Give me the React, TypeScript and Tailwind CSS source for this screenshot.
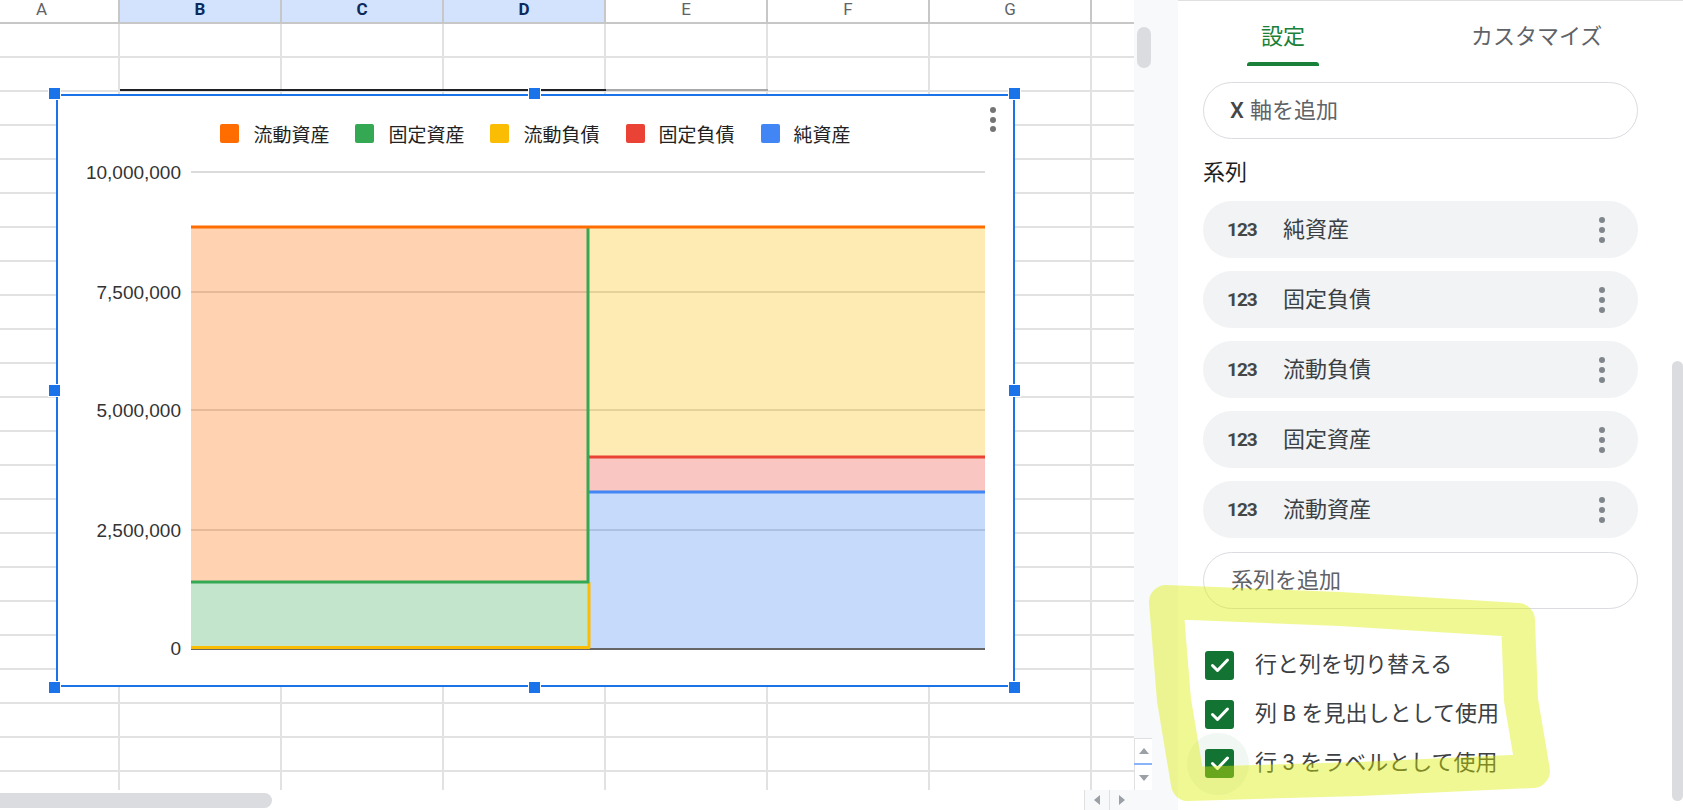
import React from 'react';

// column header of the sheet
const Header = () => (
  <div className="flex h-[24px] shrink-0 border-b-2 border-[#c7c7c7] font-['Roboto',Arial,sans-serif] text-[17px] leading-[19px]">
    <div className="flex w-[120px] shrink-0 items-start border-r-2 border-[#c7c7c7] bg-white pl-[36px]">
      <span className="text-[#5f6368]">A</span>
    </div>
    <div className="flex w-[162px] shrink-0 items-start justify-center border-r-2 border-[#c7c7c7] bg-[#d3e3fd]">
      <span className="font-bold text-[#0b2a5b]">B</span>
    </div>
    <div className="flex w-[162px] shrink-0 items-start justify-center border-r-2 border-[#c7c7c7] bg-[#d3e3fd]">
      <span className="font-bold text-[#0b2a5b]">C</span>
    </div>
    <div className="flex w-[162px] shrink-0 items-start justify-center border-r-2 border-[#c7c7c7] bg-[#d3e3fd]">
      <span className="font-bold text-[#0b2a5b]">D</span>
    </div>
    <div className="flex w-[162px] shrink-0 items-start justify-center border-r-2 border-[#c7c7c7] bg-white">
      <span className="text-[#5f6368]">E</span>
    </div>
    <div className="flex w-[162px] shrink-0 items-start justify-center border-r-2 border-[#c7c7c7] bg-white">
      <span className="text-[#5f6368]">F</span>
    </div>
    <div className="flex w-[162px] shrink-0 items-start justify-center border-r-2 border-[#c7c7c7] bg-white">
      <span className="text-[#5f6368]">G</span>
    </div>
    <div className="flex-1 bg-white" />
  </div>
);

const Row = () => (
  <div className="flex h-[34px] shrink-0 border-b-2 border-[#e2e2e2]">
    <div className="w-[120px] shrink-0 border-r-2 border-[#e2e2e2]" />
    <div className="w-[162px] shrink-0 border-r-2 border-[#e2e2e2]" />
    <div className="w-[162px] shrink-0 border-r-2 border-[#e2e2e2]" />
    <div className="w-[162px] shrink-0 border-r-2 border-[#e2e2e2]" />
    <div className="w-[162px] shrink-0 border-r-2 border-[#e2e2e2]" />
    <div className="w-[162px] shrink-0 border-r-2 border-[#e2e2e2]" />
    <div className="w-[162px] shrink-0 border-r-2 border-[#e2e2e2]" />
    <div className="flex-1" />
  </div>
);

const legend = [
  { name: '流動資産', color: 'bg-[#ff6d01]' },
  { name: '固定資産', color: 'bg-[#34a853]' },
  { name: '流動負債', color: 'bg-[#fbbc04]' },
  { name: '固定負債', color: 'bg-[#ea4335]' },
  { name: '純資産', color: 'bg-[#4285f4]' },
];

const yTicks = [
  { y: 76, label: '10,000,000' },
  { y: 196, label: '7,500,000' },
  { y: 314, label: '5,000,000' },
  { y: 434, label: '2,500,000' },
  { y: 552, label: '0' },
];

const Handle = ({ className }: { className: string }) => (
  <div className={`absolute h-[13px] w-[13px] border border-white bg-[#1a73e8] ${className}`} />
);

const Chart = () => (
  <div className="absolute left-[56px] top-[94px] h-[593px] w-[959px] border-2 border-[#1a73e8] bg-white">
    <svg className="absolute left-0 top-0" width={955} height={589} viewBox="0 0 955 589">
      {yTicks.slice(0, 4).map((t) => (
        <line key={t.y} x1={133} x2={927} y1={t.y} y2={t.y} stroke="#cfcfcf" strokeWidth={1.5} />
      ))}
      <rect x={133} y={486} width={397} height={66} fill="#34a853" fillOpacity={0.3} />
      <rect x={133} y={131} width={397} height={355} fill="#ff6d01" fillOpacity={0.3} />
      <rect x={531} y={396} width={396} height={156} fill="#4285f4" fillOpacity={0.3} />
      <rect x={531} y={361} width={396} height={35} fill="#ea4335" fillOpacity={0.3} />
      <rect x={531} y={131} width={396} height={230} fill="#fbbc04" fillOpacity={0.3} />
      <line x1={133} x2={927} y1={553} y2={553} stroke="#333" strokeWidth={1.5} />
      <polyline points="133,551.5 531,551.5 531,486" fill="none" stroke="#fbbc04" strokeWidth={3} strokeLinejoin="round" />
      <polyline points="133,486 530,486 530,131" fill="none" stroke="#34a853" strokeWidth={3} strokeLinejoin="round" />
      <line x1={531} x2={927} y1={361} y2={361} stroke="#ea4335" strokeWidth={3} />
      <line x1={531} x2={927} y1={396} y2={396} stroke="#4285f4" strokeWidth={3} />
      <line x1={133} x2={927} y1={131} y2={131} stroke="#ff6d01" strokeWidth={3} />
      {yTicks.map((t) => (
        <text
          key={t.label}
          x={123}
          y={t.y}
          textAnchor="end"
          dominantBaseline="central"
          fill="#333"
          fontSize={19}
          fontFamily="'Liberation Sans', Arial, sans-serif"
        >
          {t.label}
        </text>
      ))}
    </svg>

    <div className="relative mt-[28px] flex items-center justify-center gap-[26px] font-['Noto_Sans_CJK_JP',sans-serif] text-[19px] leading-[19px] text-[#222]">
      {legend.map((l) => (
        <div key={l.name} className="flex items-center gap-[14px]">
          <span className={`h-[19px] w-[19px] rounded-[2px] ${l.color}`} />
          <span>{l.name}</span>
        </div>
      ))}
    </div>

    <div className="absolute left-[932px] top-[11px] flex flex-col gap-[3.5px]">
      <span className="h-[6px] w-[6px] rounded-full bg-[#757575]" />
      <span className="h-[6px] w-[6px] rounded-full bg-[#757575]" />
      <span className="h-[6px] w-[6px] rounded-full bg-[#757575]" />
    </div>

    <Handle className="left-[-10px] top-[-9px]" />
    <Handle className="left-[470px] top-[-9px]" />
    <Handle className="left-[950px] top-[-9px]" />
    <Handle className="left-[-10px] top-[288px]" />
    <Handle className="left-[950px] top-[288px]" />
    <Handle className="left-[-10px] top-[585px]" />
    <Handle className="left-[470px] top-[585px]" />
    <Handle className="left-[950px] top-[585px]" />
  </div>
);

const Tri = ({ dir }: { dir: 'up' | 'down' | 'left' | 'right' }) => {
  const pts = {
    up: '0,6 5,0 10,6',
    down: '0,0 10,0 5,6',
    left: '6,0 6,10 0,5',
    right: '0,0 6,5 0,10',
  }[dir];
  const vertical = dir === 'up' || dir === 'down';
  return (
    <svg width={vertical ? 10 : 6} height={vertical ? 6 : 10} viewBox={vertical ? '0 0 10 6' : '0 0 6 10'}>
      <polygon points={pts} fill="#9aa0a6" />
    </svg>
  );
};

const series = ['純資産', '固定負債', '流動負債', '固定資産', '流動資産'];

const Check = () => (
  <div className="flex h-[29px] w-[29px] shrink-0 items-center justify-center rounded-[3px] bg-[#137333]">
    <svg width="24" height="24" viewBox="0 0 24 24">
      <path d="M4.5 12.5l5 5 10-10.5" fill="none" stroke="white" strokeWidth="3" strokeLinecap="round" strokeLinejoin="round" />
    </svg>
  </div>
);

const Panel = () => (
  <div className="relative h-full w-[505px] shrink-0 border-t border-[#e0e0e0] bg-white pl-[25px] pr-[45px] font-['Roboto','Noto_Sans_CJK_JP',sans-serif] text-[22px] leading-[30px]">
    <div className="flex h-[65px] items-end">
      <div className="ml-[44px] flex w-[72px] flex-col items-center">
        <span className="text-[#188038]">設定</span>
        <span className="mt-[10px] h-[4px] w-full rounded-t-[3px] bg-[#188038]" />
      </div>
      <span className="mb-[14px] ml-[152px] text-[#5f6368]">カスタマイズ</span>
    </div>

    <div className="mt-[16px] flex h-[57px] items-center rounded-full border border-[#dadce0] pl-[26px] text-[#5f6368]">
      <span className="font-medium text-[#444746]">X</span>
      <span className="ml-[6px]">軸を追加</span>
    </div>

    <div className="mt-[19px] text-[#1f1f1f]">系列</div>

    <div className="mt-[13px] flex flex-col gap-[13px]">
      {series.map((s) => (
        <div key={s} className="flex h-[57px] items-center rounded-full bg-[#f1f3f4] pl-[24px] pr-[33px]">
          <span className="w-[30px] font-['Roboto',sans-serif] text-[19px] font-bold tracking-[-1px] text-[#444746]">123</span>
          <span className="ml-[26px] text-[#3c4043]">{s}</span>
          <div className="ml-auto flex flex-col gap-[4px]">
            <span className="h-[6px] w-[6px] rounded-full bg-[#80868b]" />
            <span className="h-[6px] w-[6px] rounded-full bg-[#80868b]" />
            <span className="h-[6px] w-[6px] rounded-full bg-[#80868b]" />
          </div>
        </div>
      ))}
    </div>

    <div className="mt-[14px] flex h-[57px] items-center rounded-full border border-[#dadce0] pl-[27px] text-[#5f6368]">
      系列を追加
    </div>

    <div className="ml-[2px] mt-[41px] flex flex-col gap-[19px] text-[#3c4043]">
      <div className="flex items-center gap-[21px]">
        <Check />
        <span>行と列を切り替える</span>
      </div>
      <div className="flex items-center gap-[21px]">
        <Check />
        <span>列 B を見出しとして使用</span>
      </div>
      <div className="flex items-center gap-[21px]">
        <div className="relative">
          <div className="absolute left-[-18px] top-[-16px] h-[62px] w-[62px] rounded-full bg-[#137333]/[0.06]" />
          <div className="relative">
            <Check />
          </div>
        </div>
        <span>行 3 をラベルとして使用</span>
      </div>
    </div>

    <div className="absolute right-0 top-[360px] h-[440px] w-[11px] rounded-full bg-[#dadce0]" />
  </div>
);

export default function App() {
  return (
    <div className="relative flex h-[810px] w-[1683px] overflow-hidden bg-white">
      {/* sheet */}
      <div className="relative flex w-[1134px] shrink-0 flex-col">
        <Header />
        <div className="flex flex-1 flex-col overflow-hidden">
          {Array.from({ length: 23 }).map((_, i) => (
            <Row key={i} />
          ))}
        </div>
        <div className="flex h-[20px] shrink-0 bg-white">
          <div className="mt-[3px] h-[15px] w-[272px] rounded-r-full bg-[#dadce0]" />
          <div className="flex-1" />
          <div className="flex w-[25px] items-center justify-center border-l border-[#e0e0e0] bg-[#f8f9fa]">
            <Tri dir="left" />
          </div>
          <div className="flex w-[25px] items-center justify-center border-l border-[#e0e0e0] bg-[#f8f9fa]">
            <Tri dir="right" />
          </div>
        </div>

        <div className="absolute left-[120px] top-[89px] h-[2px] w-[486px] bg-[#202124]" />
        <div className="absolute left-[606px] top-[89px] h-[2px] w-[162px] bg-[#a8a8a8]" />
        <Chart />
      </div>

      {/* vertical scrollbar of the sheet */}
      <div className="flex w-[18px] shrink-0 flex-col bg-[#f8f9fa]">
        <div className="ml-[3px] mt-[27px] h-[41px] w-[14px] rounded-full bg-[#dadce0]" />
        <div className="flex-1" />
        <div className="flex h-[25px] items-center justify-center border-l border-t border-[#e0e0e0] bg-white">
          <Tri dir="up" />
        </div>
        <div className="h-[2px] bg-[#8ab4f8]" />
        <div className="flex h-[25px] items-center justify-center border-l border-[#e0e0e0] bg-white">
          <Tri dir="down" />
        </div>
        <div className="h-[20px]" />
      </div>
      <div className="w-[26px] shrink-0 bg-[#f8f9fa]" />

      <Panel />

      {/* highlighter scribble */}
      <svg className="pointer-events-none absolute left-0 top-0" width={1683} height={810} viewBox="0 0 1683 810">
        <path
          d="M1166 602 L1340 609 L1518 620 L1521 700 L1533 771 L1360 779 L1188 784 L1174 700 Z"
          fill="none"
          stroke="rgb(219,238,0)"
          strokeOpacity={0.42}
          strokeWidth={34}
          strokeLinejoin="round"
          strokeLinecap="round"
        />
      </svg>
    </div>
  );
}
